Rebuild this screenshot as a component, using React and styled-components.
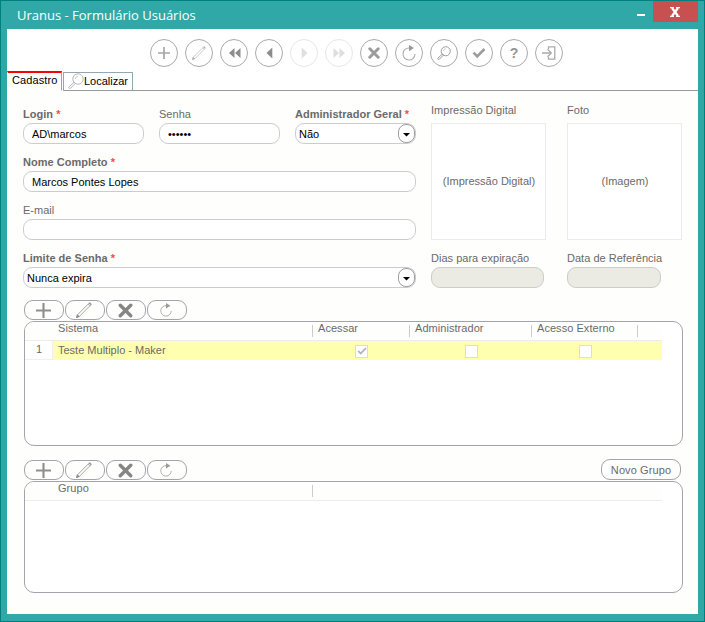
import React from 'react';
import styled, { createGlobalStyle } from 'styled-components';

const GlobalStyle = createGlobalStyle`
  * {
    box-sizing: border-box;
  }
  body {
    margin: 0;
    font-family: "Liberation Sans", Arial, sans-serif;
    font-size: 11px;
    color: #6a6a6a;
  }
  button, input {
    font: inherit;
    letter-spacing: inherit;
  }
`
const Window = styled.div`
  display: flex;
  flex-direction: column;
  width: 705px;
  height: 622px;
  padding: 0 6px 7px;
  background: #30a8a8;
  border: 1px solid #007f7f;
`
const TitleBar = styled.header`
  display: flex;
  align-items: flex-start;
  height: 28px;
  flex: none;
`
const Title = styled.div`
  flex: 1;
  padding-left: 10px;
  color: #fff;
  font-family: "Open Sans", "Noto Sans", sans-serif;
  font-size: 13px;
  line-height: 28px;
`
const Minimize = styled.button`
  width: 8px;
  height: 2px;
  margin: 13px 8px 0 0;
  padding: 0;
  border: 0;
  background: #fff;
`
const Close = styled.button`
  width: 45px;
  height: 21px;
  padding: 0 1px 0 0;
  border: 0;
  background: #c75050;
  display: flex;
  align-items: center;
  justify-content: center;
`
const Body = styled.main`
  flex: 1;
  min-height: 0;
  display: flex;
  flex-direction: column;
  background: #fff;
`
const Toolbar = styled.div`
  display: flex;
  gap: 7px;
  padding: 10px 0 0 143px;
  height: 42px;
  flex: none;
`
const RoundButton = styled.button`
  width: 28px;
  height: 28px;
  padding: 0;
  border: 1.4px solid #a9a9a9;
  border-radius: 50%;
  background: #fff;
  display: flex;
  align-items: center;
  justify-content: center;
  flex: none;
  opacity: ${props => props.disabled ? 0.28 : 1};
`
const Tabs = styled.div`
  display: flex;
  align-items: flex-end;
  height: 20px;
  flex: none;
  color: #000;
`
const Tab = styled.div`
  display: flex;
  align-items: center;
  width: ${props => props.active ? '55px' : '70px'};
  height: ${props => props.active ? '20px' : '19px'};
  margin-right: ${props => props.active ? '1px' : 0};
  padding-left: 4px;
  padding-bottom: ${props => props.active ? '4px' : '2px'};
  background: ${props => props.active ? '#fefefc' : '#fff'};
  border: 1px solid #91a7b4;
  border-top: ${props => props.active ? '2px solid #f00' : '1px solid #91a7b4'};
  border-left-color: ${props => props.active ? '#fefefc' : '#91a7b4'};
  border-bottom-color: ${props => props.active ? '#fefefc' : '#919b9c'};
  letter-spacing: ${props => props.active ? '0.1px' : '0'};
  white-space: nowrap;
`
const TabFill = styled.div`
  flex: 1;
  height: 1px;
  background: #919b9c;
`
const Page = styled.section`
  flex: 1;
  min-height: 0;
  padding: 12px 15px 0 16px;
  background: #fefefc;
`
const Form = styled.div`
  display: flex;
  gap: 15px;
  height: 197px;
`
const Fields = styled.div`
  width: 393px;
  padding-top: 4px;
`
const FieldRow = styled.div`
  display: grid;
  grid-template-columns: repeat(3, 1fr);
  gap: 15px;
  height: 48px;
`
const Field = styled.div`
  grid-column: ${props => props.wide && '1 / -1'};
  min-width: 0;
`
const Label = styled.label`
  display: block;
  height: 16px;
  line-height: 14px;
  font-weight: ${props => props.required ? 'bold' : 'normal'};
  letter-spacing: 0.02px;
  white-space: nowrap;
`
const Required = styled.span`
  color: #ff4a3a;
`
const Input = styled.input`
  display: block;
  width: ${props => props.boxWidth || '100%'};
  height: 21px;
  padding: 0 8px;
  border: 1px solid #ccc;
  border-radius: 9px;
  background: ${props => props.disabled ? '#ebebe4' : '#fff'};
  color: #000;
  outline: none;
`
const Select = styled.div`
  display: flex;
  align-items: center;
  justify-content: space-between;
  height: 21px;
  padding-left: 3px;
  border: 1px solid #ccc;
  border-radius: 9px;
  background: #fff;
  color: #000;
`
const SelectArrow = styled.span`
  width: 17px;
  height: 19px;
  border: 1px solid #9d9da6;
  border-radius: 8px;
  display: flex;
  align-items: center;
  justify-content: center;
  padding-top: 2px;
`
const Side = styled.div`
  display: grid;
  grid-template-columns: 115px 115px;
  grid-template-rows: 20px 117px 27px 21px;
  column-gap: 21px;
`
const SideLabel = styled(Label)`
  height: 14px;
  align-self: ${props => props.lower ? 'end' : 'start'};
  margin-bottom: ${props => props.lower && '2px'};
`
const Picture = styled.div`
  display: flex;
  align-items: center;
  justify-content: center;
  padding: 0 0 2px 1px;
  border: 1px solid #ebebeb;
  background: #fff;
`
const GridSection = styled.div`
  margin-left: 1px;
  height: 160px;
`
const GridBar = styled.div`
  display: flex;
  align-items: flex-end;
  gap: 1px;
  height: 21px;
  padding: 0 2px 1px 0;
`
const PillButton = styled.button`
  width: 40px;
  height: 20px;
  padding: 0 2px 0 0;
  border: 1px solid #a3a3ad;
  border-radius: 9px;
  background: #fefefc;
  color: inherit;
  display: flex;
  align-items: center;
  justify-content: center;
`
const TextButton = styled(PillButton)`
  width: 80px;
  height: 21px;
  margin-left: auto;
  padding: 0;
  letter-spacing: 0.1px;
`
const GridBox = styled.div`
  width: 659px;
  height: ${props => props.boxHeight};
  border: 1px solid #a3a3ad;
  border-radius: 10px;
  background: #fff;
  overflow: hidden;
`
const GridLine = styled.div`
  display: grid;
  grid-template-columns: 28px 260px 97px 122px 106px 1fr;
  width: 637px;
`
const GridHead = styled(GridLine)`
  height: 19px;
  background: #fefefc;
  border-bottom: 1px solid #ececec;
`
const HeadCell = styled.div`
  display: flex;
  align-items: flex-start;
  padding-left: 5px;
  line-height: 13px;
  letter-spacing: 0.05px;
  white-space: nowrap;
  &::after {
    content: '';
    width: 1px;
    height: 12px;
    margin: 3px 0 0 auto;
    background: #ccc;
  }
`
const GridRow = styled(GridLine)`
  height: 19px;
  background: #ffffb0;
`
const RowNumber = styled.div`
  border-right: 1px solid #f0f0f0;
  border-bottom: 1px solid #f0f0f0;
  background: #fff;
  text-align: center;
  padding-left: 1px;
  line-height: 16px;
`
const Cell = styled.div`
  display: flex;
  align-items: center;
  justify-content: ${props => props.center ? 'center' : 'flex-start'};
  padding-left: ${props => props.center ? 0 : '5px'};
  padding-bottom: 1px;
`
const CheckBox = styled.span`
  width: 13px;
  height: 13px;
  margin-top: 2px;
  border: 1px solid #ddd;
  background: #fff;
  display: flex;
  align-items: center;
  justify-content: center;
`

const Plus = ({ size = 12, color = '#a6a6a6' }) => (
  <svg width={size} height={size} viewBox="0 0 12 12">
    <path d="M6 0v12M0 6h12" stroke={color} strokeWidth="1.7" />
  </svg>
)
const Pencil = ({ size = 14, color = '#b0b0b0' }) => (
  <svg width={size} height={size} viewBox="0 0 14 14" fill="none" stroke={color} strokeWidth=".7">
    <path d="M.8 13.2l.5-2L11.8.7q1 .4 1.5 1.5L2.8 12.7zM1.3 11.2l1.5 1.5M10.7 1.8l1.5 1.5" />
    <path d="M.8 13.2l.4-1.2.8.8zM11.8.9l1.3 1.3" strokeWidth="1.2" />
  </svg>
)
const Arrows = ({ double, right }) => (
  <svg width="13" height="12" viewBox="0 0 13 12" fill="#8c8c8c">
    <g transform={right ? 'translate(13 0) scale(-1 1)' : undefined}>
      {double
        ? <path d="M6.5 1v10L1 6zM12.5 1v10L7 6z" />
        : <path d="M9.3 .5v11L3.5 6z" />}
    </g>
  </svg>
)
const Cross = ({ size = 12, color = '#9c9c9c', stroke = 3, cap = 'round' }) => (
  <svg width={size} height={size} viewBox="0 0 12 12">
    <path d="M1.8 1.8l8.4 8.4M10.2 1.8l-8.4 8.4" stroke={color} strokeWidth={stroke} strokeLinecap={cap} />
  </svg>
)
const Refresh = ({ size = 16 }) => (
  <svg width={size} height={size} viewBox="0 0 16 16">
    <path d="M8.5 3A6 6 0 1 0 14 9" fill="none" stroke="#ababab" strokeWidth="1.1" />
    <path d="M8 0l5 3-5 3.2z" fill="#999" />
  </svg>
)
const Lens = ({ size = 14, color = '#999', width = 1.1 }) => (
  <svg width={size} height={size} viewBox="0 0 16 16" fill="none" stroke={color} strokeWidth={width}>
    <circle cx="10" cy="6" r="5.2" />
    <path d="M7.3 6A2.7 2.7 0 0 1 10 3.3" strokeWidth=".6" />
    <path d="M6.2 9.2L1 13.8q-.5 1 .3 1.5.7.5 1.4-.2l4.7-4.7z" />
  </svg>
)
const Tick = ({ size = 14, color = '#9c9c9c', width = 2.6 }) => (
  <svg width={size} height={size} viewBox="0 0 14 14">
    <path d="M1.5 6.7L5.2 10.4l7.3-7.4" fill="none" stroke={color} strokeWidth={width} />
  </svg>
)
const Question = styled.span`
  color: #959595;
  font-size: 14px;
  font-weight: bold;
  line-height: 14px;
`
const Exit = () => (
  <svg width="14" height="14" viewBox="0 0 14 14" fill="none" stroke="#ababab" strokeWidth="1.3">
    <path d="M6.5 3V.8h6.3v12.4H6.5V11M0 7h9M5.5 3.2L9.3 7l-3.8 3.8" />
  </svg>
)
const Caret = () => (
  <svg width="7" height="4" viewBox="0 0 7 4">
    <path d="M0 0h7L3.5 3.6z" fill="#000" />
  </svg>
)
const CloseMark = () => (
  <svg width="10" height="10" viewBox="0 0 10 10" fill="none" stroke="#fff">
    <path d="M2 1l6 8M8 1L2 9" strokeWidth="2.2" />
    <path d="M0 .7h4M6 .7h4M0 9.3h4M6 9.3h4" strokeWidth="1.2" />
  </svg>
)

const actions = [
  { id: 'new', icon: <Plus /> },
  { id: 'edit', icon: <Pencil /> },
  { id: 'first', icon: <Arrows double /> },
  { id: 'previous', icon: <Arrows /> },
  { id: 'next', icon: <Arrows right />, disabled: true },
  { id: 'last', icon: <Arrows double right />, disabled: true },
  { id: 'delete', icon: <Cross /> },
  { id: 'refresh', icon: <Refresh /> },
  { id: 'search', icon: <Lens /> },
  { id: 'confirm', icon: <Tick /> },
  { id: 'help', icon: <Question>?</Question> },
  { id: 'exit', icon: <Exit /> },
]

const GridButtons = () => (
  <>
    <PillButton><Plus size={15} color="#8f8f8f" /></PillButton>
    <PillButton><Pencil size={16} color="#8c8c8c" /></PillButton>
    <PillButton><Cross size={15} color="#858585" stroke={2.7} /></PillButton>
    <PillButton><Refresh size={14} /></PillButton>
  </>
)

const RequiredLabel = ({ children }) => (
  <Label required>{children} <Required>*</Required></Label>
)

const App = () => (
  <>
    <GlobalStyle />
    <Window>
      <TitleBar>
        <Title>Uranus - Formulário Usuários</Title>
        <Minimize />
        <Close><CloseMark /></Close>
      </TitleBar>
      <Body>
        <Toolbar>
          {actions.map(action => (
            <RoundButton key={action.id} disabled={action.disabled}>{action.icon}</RoundButton>
          ))}
        </Toolbar>
        <Tabs>
          <Tab active>Cadastro</Tab>
          <Tab><Lens size={16} color="#b0b0b0" width={0.9} />Localizar</Tab>
          <TabFill />
        </Tabs>
        <Page>
          <Form>
            <Fields>
              <FieldRow>
                <Field>
                  <RequiredLabel>Login</RequiredLabel>
                  <Input defaultValue="AD\marcos" />
                </Field>
                <Field>
                  <Label>Senha</Label>
                  <Input type="password" defaultValue="marcos" />
                </Field>
                <Field>
                  <RequiredLabel>Administrador Geral</RequiredLabel>
                  <Select>Não<SelectArrow><Caret /></SelectArrow></Select>
                </Field>
              </FieldRow>
              <FieldRow>
                <Field wide>
                  <RequiredLabel>Nome Completo</RequiredLabel>
                  <Input defaultValue="Marcos Pontes Lopes" />
                </Field>
              </FieldRow>
              <FieldRow>
                <Field wide>
                  <Label>E-mail</Label>
                  <Input />
                </Field>
              </FieldRow>
              <FieldRow>
                <Field wide>
                  <RequiredLabel>Limite de Senha</RequiredLabel>
                  <Select>Nunca expira<SelectArrow><Caret /></SelectArrow></Select>
                </Field>
              </FieldRow>
            </Fields>
            <Side>
              <SideLabel>Impressão Digital</SideLabel>
              <SideLabel>Foto</SideLabel>
              <Picture>(Impressão Digital)</Picture>
              <Picture>(Imagem)</Picture>
              <SideLabel lower>Dias para expiração</SideLabel>
              <SideLabel lower>Data de Referência</SideLabel>
              <Input disabled boxWidth="113px" />
              <Input disabled boxWidth="94px" />
            </Side>
          </Form>
          <GridSection>
            <GridBar><GridButtons /></GridBar>
            <GridBox boxHeight="125px">
              <GridHead>
                <span />
                <HeadCell>Sistema</HeadCell>
                <HeadCell>Acessar</HeadCell>
                <HeadCell>Administrador</HeadCell>
                <HeadCell>Acesso Externo</HeadCell>
              </GridHead>
              <GridRow>
                <RowNumber>1</RowNumber>
                <Cell>Teste Multiplo - Maker</Cell>
                <Cell center><CheckBox><Tick size={10} color="#b5b5b5" width={2.4} /></CheckBox></Cell>
                <Cell center><CheckBox /></Cell>
                <Cell center><CheckBox /></Cell>
              </GridRow>
            </GridBox>
          </GridSection>
          <GridSection>
            <GridBar>
              <GridButtons />
              <TextButton>Novo Grupo</TextButton>
            </GridBar>
            <GridBox boxHeight="112px">
              <GridHead>
                <span />
                <HeadCell>Grupo</HeadCell>
              </GridHead>
            </GridBox>
          </GridSection>
        </Page>
      </Body>
    </Window>
  </>
)

export default App;
